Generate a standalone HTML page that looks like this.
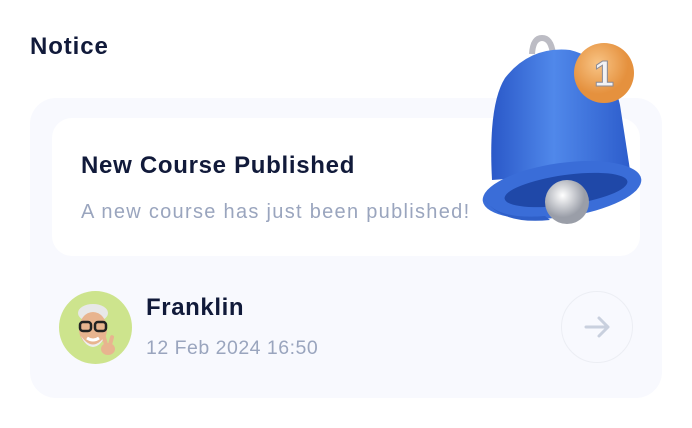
<!DOCTYPE html>
<html><head><style>
body{margin:0;width:692px;height:428px;background:#fff;font-family:"Liberation Sans",sans-serif;position:relative;overflow:hidden}
.t{position:absolute;left:30px;top:33px;font-size:24px;font-weight:bold;color:#111a3a;letter-spacing:0.9px}
.outer{position:absolute;left:30px;top:98px;width:632px;height:300px;background:#f8f9fe;border-radius:26px}
.inner{position:absolute;left:52px;top:118px;width:588px;height:138px;background:#fff;border-radius:20px}
.h{position:absolute;left:81px;top:152px;font-size:24px;font-weight:bold;color:#111a3a;letter-spacing:0.7px}
.s{position:absolute;left:81px;top:201px;font-size:20px;color:#9aa5be;letter-spacing:1.3px}
.av{position:absolute;left:59px;top:291px;width:73px;height:73px;border-radius:50%;background:#cde48d;overflow:hidden}
.n{position:absolute;left:146px;top:294px;font-size:24px;font-weight:bold;color:#111a3a;letter-spacing:0.6px}
.d{position:absolute;left:146px;top:337px;font-size:19.5px;color:#9aa5be;letter-spacing:0.5px}
.c{position:absolute;left:561px;top:291px;width:70px;height:70px;border:1.5px solid #eceef4;border-radius:50%}
</style></head><body>
<div class="t">Notice</div>
<div class="outer"></div>
<div class="inner"></div>
<div class="h">New Course Published</div>
<div class="s">A new course has just been published!</div>
<div class="av">
<svg width="73" height="73" viewBox="0 0 73 73">
<ellipse cx="34" cy="22" rx="15" ry="9" fill="#e8e8e8"/>
<ellipse cx="34" cy="38" rx="14" ry="17" fill="#e8b48f"/>
<path d="M22 45 Q34 62 46 45 Q42 55 34 56 Q26 55 22 45Z" fill="#eee"/>
<rect x="21" y="31" width="11" height="9" rx="3" fill="none" stroke="#222" stroke-width="2.5"/>
<rect x="36" y="31" width="11" height="9" rx="3" fill="none" stroke="#222" stroke-width="2.5"/>
<path d="M28 47 Q34 51 40 47" stroke="#fff" stroke-width="3" fill="none"/>
<ellipse cx="49" cy="58" rx="7" ry="6" fill="#e8b48f"/>
<rect x="44" y="44" width="4" height="12" rx="2" fill="#e8b48f" transform="rotate(-15 46 50)"/>
<rect x="50" y="44" width="4" height="12" rx="2" fill="#e8b48f" transform="rotate(15 52 50)"/>
</svg></div>
<div class="n">Franklin</div>
<div class="d">12 Feb 2024 16:50</div>
<div class="c"><svg width="70" height="70" viewBox="0 0 70 70"><path d="M24 35H46M37 26L46 35L37 44" stroke="#c9d0de" stroke-width="3" fill="none" stroke-linecap="round" stroke-linejoin="round"/></svg></div>
<svg style="position:absolute;left:470px;top:20px" width="190" height="210" viewBox="0 0 190 210">
<defs>
<linearGradient id="b" x1="0" x2="1"><stop offset="0" stop-color="#2a58c8"/><stop offset=".45" stop-color="#5088ea"/><stop offset="1" stop-color="#2d5dcc"/></linearGradient>
<radialGradient id="ba" cx=".4" cy=".35"><stop offset="0" stop-color="#fff"/><stop offset="1" stop-color="#9a9ea8"/></radialGradient>
<radialGradient id="o" cx=".4" cy=".35"><stop offset="0" stop-color="#f8c485"/><stop offset="1" stop-color="#e5913e"/></radialGradient>
</defs>
<path d="M62 34 Q63 18 72 18 Q81 18 83 34" stroke="#bcbcc4" stroke-width="6" fill="none"/>
<path d="M22 160 Q18 85 35 58 Q60 26 100 30 Q140 40 150 85 L160 150 Z" fill="url(#b)"/>
<ellipse cx="92" cy="170" rx="80" ry="27" transform="rotate(-8 92 170)" fill="#3a6dd8"/>
<ellipse cx="96" cy="170" rx="62" ry="15" transform="rotate(-8 96 170)" fill="#1f48a8"/>
<circle cx="97" cy="182" r="22" fill="url(#ba)"/>
<path d="M14 178 Q25 200 75 196 L80 200 Q30 205 14 178Z" fill="#2f5fc8"/>
<circle cx="134" cy="53" r="30" fill="url(#o)"/>
<text x="134" y="66" text-anchor="middle" font-family="Liberation Sans" font-weight="bold" font-size="36" fill="#f2f2f4" stroke="#8a8a95" stroke-width="1">1</text>
</svg>
</body></html>
